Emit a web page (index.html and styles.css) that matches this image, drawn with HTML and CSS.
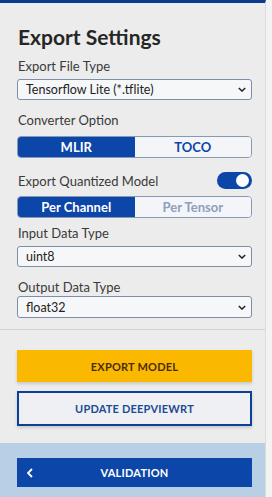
FILE: index.html
```html
<!DOCTYPE html>
<html lang="en">
<head>
    <meta charset="UTF-8">
    <meta name="viewport" content="width=device-width, initial-scale=1.0">
    <title>Export Settings</title>
    <link rel="stylesheet" href="styles.css">
</head>
<body>
    <div class="panel">
        <div class="settings">
            <h1>Export Settings</h1>

            <label class="label">Export File Type</label>
            <div class="select">
                <span>Tensorflow Lite (*.tflite)</span>
                <svg class="chevron" viewBox="0 0 10 6" width="8" height="5"><path d="M1 1l4 4 4-4" fill="none" stroke="#222" stroke-width="1.8"/></svg>
            </div>

            <label class="label">Converter Option</label>
            <div class="segmented">
                <button class="seg active">MLIR</button>
                <button class="seg">TOCO</button>
            </div>

            <div class="toggle-row">
                <label class="label">Export Quantized Model</label>
                <span class="toggle"><span class="knob"></span></span>
            </div>
            <div class="segmented compact">
                <button class="seg active">Per Channel</button>
                <button class="seg muted">Per Tensor</button>
            </div>

            <label class="label">Input Data Type</label>
            <div class="select">
                <span>uint8</span>
                <svg class="chevron" viewBox="0 0 10 6" width="8" height="5"><path d="M1 1l4 4 4-4" fill="none" stroke="#222" stroke-width="1.8"/></svg>
            </div>

            <label class="label tight">Output Data Type</label>
            <div class="select last">
                <span>float32</span>
                <svg class="chevron" viewBox="0 0 10 6" width="8" height="5"><path d="M1 1l4 4 4-4" fill="none" stroke="#222" stroke-width="1.8"/></svg>
            </div>
        </div>

        <div class="actions">
            <button class="btn-export">EXPORT MODEL</button>
            <button class="btn-update">UPDATE DEEPVIEWRT</button>
        </div>

        <div class="footer">
            <button class="btn-nav">
                <svg class="back" viewBox="0 0 6 10" width="6" height="10"><path d="M5 1L1 5l4 4" fill="none" stroke="#fff" stroke-width="1.8"/></svg>
                VALIDATION
            </button>
        </div>
    </div>
</body>
</html>
```

FILE: styles.css
```css
body {
    margin: 0;
    padding: 0;
    background-color: #f3f3f3;
    font-family: "Lato", "Noto Sans", sans-serif;
    color: #333;
}

.panel {
    width: 266px;
    height: 497px;
    display: flex;
    flex-direction: column;
    background-color: #ececec;
    border-top: 3px solid #0c3b8d;
    border-right: 1px solid #dcdcdc;
    box-sizing: border-box;
}

.settings {
    padding: 0 13px 11px 17px;
    display: flex;
    flex-direction: column;
    border-bottom: 1px solid #d2d6dc;
}

h1 {
    font-size: 21px;
    line-height: 24px;
    font-weight: 700;
    color: #262626;
    margin: 22px 0 9px 1px;
}

.label {
    font-size: 13px;
    color: #3a3a3a;
    margin: 0 0 5px 1px;
    line-height: 16px;
}

.label.tight {
    margin-bottom: 1px;
}

.select {
    height: 21px;
    box-sizing: border-box;
    display: flex;
    align-items: center;
    justify-content: space-between;
    padding: 0 5px 0 8px;
    margin-bottom: 12px;
    background-color: #f6f7f9;
    border: 1px solid #7e8ea8;
    border-radius: 3px;
    font-size: 12.5px;
    color: #222;
}

.select.last {
    height: 22px;
    margin-bottom: 0;
}

.chevron {
    display: block;
}

.segmented {
    display: flex;
    height: 22px;
    margin: 3px 0 14px;
    border: 1px solid #8799b5;
    border-radius: 4px;
    overflow: hidden;
    box-sizing: border-box;
}

.segmented.compact {
    margin: 0 0 7px;
}

.seg {
    flex: 1;
    border: none;
    padding: 0;
    font-family: inherit;
    font-size: 13px;
    font-weight: 700;
    color: #0b46a8;
    background-color: #f3f5f8;
}

.seg.active {
    background-color: #0b46a8;
    color: #ffffff;
}

.seg.muted {
    color: #8ea0bb;
}

.toggle-row {
    display: flex;
    align-items: center;
    justify-content: space-between;
    margin-bottom: 7px;
}

.toggle-row .label {
    margin-bottom: 0;
}

.toggle {
    width: 35px;
    height: 17px;
    border-radius: 9px;
    background-color: #0b46a8;
    position: relative;
}

.knob {
    position: absolute;
    right: 3px;
    top: 2px;
    width: 13px;
    height: 13px;
    border-radius: 50%;
    background-color: #ffffff;
}

.actions {
    flex: 1;
    padding: 20px 13px 0 17px;
    display: flex;
    flex-direction: column;
    gap: 9px;
}

.btn-export,
.btn-update,
.btn-nav {
    font-family: inherit;
    font-size: 11px;
    font-weight: 700;
    letter-spacing: 0.2px;
    cursor: pointer;
}

.btn-export {
    height: 32px;
    border: none;
    background-color: #fbb800;
    color: #4a2d05;
    box-shadow: 0 2px 3px rgba(0, 0, 0, 0.15);
}

.btn-update {
    height: 35px;
    border: 2px solid #0b3f98;
    background-color: #eef0f3;
    color: #1f4a94;
    box-shadow: 0 2px 3px rgba(0, 0, 0, 0.15);
}

.footer {
    height: 54px;
    padding: 15px 13px 0 17px;
    box-sizing: border-box;
    background-color: #b8cfe6;
}

.btn-nav {
    width: 100%;
    height: 29px;
    border: none;
    background-color: #0b46a8;
    color: #ffffff;
    position: relative;
}

.back {
    position: absolute;
    left: 10px;
    top: 10px;
}
```
